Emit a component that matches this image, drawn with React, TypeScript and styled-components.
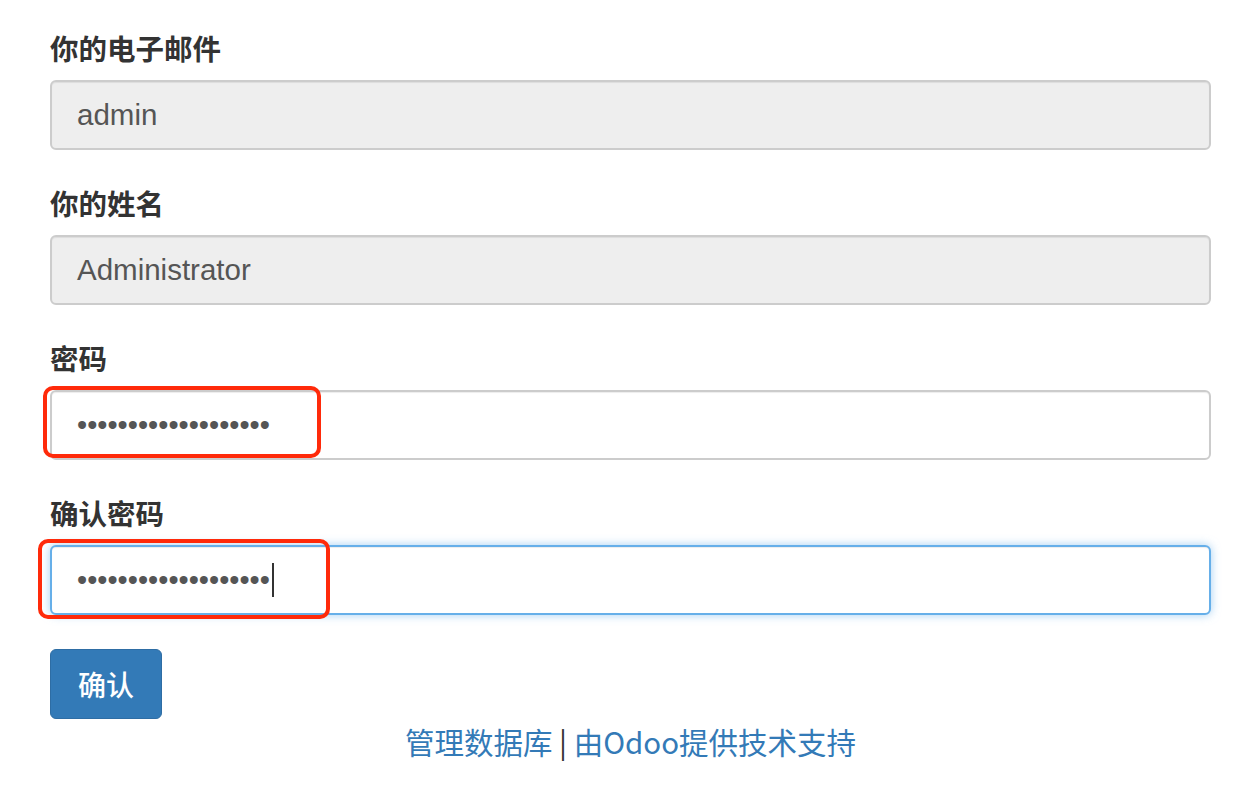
import React, { FC } from 'react'
import styled, { createGlobalStyle } from 'styled-components'

const GlobalStyle = createGlobalStyle`
  html, body {
    margin: 0;
    padding: 0;
    background: #fff;
  }
  body {
    font-family: "Liberation Sans", "Noto Sans CJK SC", Arial, sans-serif;
    color: #333;
  }
`

const Page = styled.form`
  box-sizing: border-box;
  width: 1256px;
  padding: 28px 45px 0 50px;
  display: flex;
  flex-direction: column;
`

const Group = styled.div`
  display: flex;
  flex-direction: column;
  margin-bottom: 33px;
`

const Label = styled.label`
  font-family: "Noto Sans CJK SC", "Liberation Sans", sans-serif;
  font-size: 28.5px;
  font-weight: 700;
  line-height: 40px;
  margin-bottom: 12px;
  color: #333;
`

const ControlWrap = styled.div`
  position: relative;
`

const Control = styled.div<{ $disabled?: boolean; $focused?: boolean }>`
  box-sizing: border-box;
  height: 70px;
  display: flex;
  align-items: center;
  padding: 0 25px;
  font-size: 29.5px;
  color: #555;
  border-radius: 6px;
  border: 2px solid ${(p) => (p.$focused ? '#66afe9' : '#ccc')};
  background: ${(p) => (p.$disabled ? '#eee' : '#fff')};
  box-shadow: ${(p) =>
    p.$focused
      ? 'inset 0 1px 1px rgba(0,0,0,.075), 0 0 10px rgba(102,175,233,.6)'
      : 'inset 0 1px 1px rgba(0,0,0,.075)'};
`

const Dots = styled.span`
  font-family: "Liberation Sans", sans-serif;
  font-size: 29px;
  letter-spacing: 0;
  color: #555;
`

const Caret = styled.span`
  display: inline-block;
  width: 2px;
  height: 34px;
  margin-left: 2px;
  background: #333;
`

const Annotation = styled.div<{ $left: number; $top: number; $width: number; $height: number }>`
  position: absolute;
  left: ${(p) => p.$left}px;
  top: ${(p) => p.$top}px;
  width: ${(p) => p.$width}px;
  height: ${(p) => p.$height}px;
  box-sizing: border-box;
  border: 4px solid #ff2a0a;
  border-radius: 10px;
  pointer-events: none;
`

const Button = styled.button`
  align-self: flex-start;
  box-sizing: border-box;
  height: 70px;
  width: 112px;
  margin-top: 1px;
  padding: 0;
  border: 1px solid #2e6da4;
  border-radius: 6px;
  background: #337ab7;
  color: #fff;
  font-family: "Noto Sans CJK SC", sans-serif;
  font-size: 28px;
  font-weight: 500;
`

const Footer = styled.div`
  margin-top: 2px;
  text-align: center;
  font-family: "Noto Sans CJK SC", "Liberation Sans", sans-serif;
  font-size: 29.5px;
  line-height: 40px;
  color: #333;
`

const Link = styled.a`
  color: #337ab7;
  text-decoration: none;
`

type FieldProps = {
  label: string
  value?: string
  disabled?: boolean
  password?: boolean
  focused?: boolean
  mark?: { left: number; top: number; width: number; height: number }
}

const Field: FC<FieldProps> = ({ label, value, disabled, password, focused, mark }) => (
  <Group>
    <Label>{label}</Label>
    <ControlWrap>
      <Control $disabled={disabled} $focused={focused}>
        {password ? <Dots>{'•'.repeat(19)}</Dots> : value}
        {focused && <Caret />}
      </Control>
      {mark && <Annotation $left={mark.left} $top={mark.top} $width={mark.width} $height={mark.height} />}
    </ControlWrap>
  </Group>
)

export default function App() {
  return (
    <>
      <GlobalStyle />
      <Page onSubmit={(e) => e.preventDefault()}>
        <Field label="你的电子邮件" value="admin" disabled />
        <Field label="你的姓名" value="Administrator" disabled />
        <Field label="密码" password mark={{ left: -7, top: -4, width: 278, height: 72 }} />
        <Field label="确认密码" password focused mark={{ left: -12, top: -6, width: 292, height: 80 }} />
        <Button type="submit">确认</Button>
        <Footer>
          <Link href="#">管理数据库</Link> | <Link href="#">由Odoo提供技术支持</Link>
        </Footer>
      </Page>
    </>
  )
}
